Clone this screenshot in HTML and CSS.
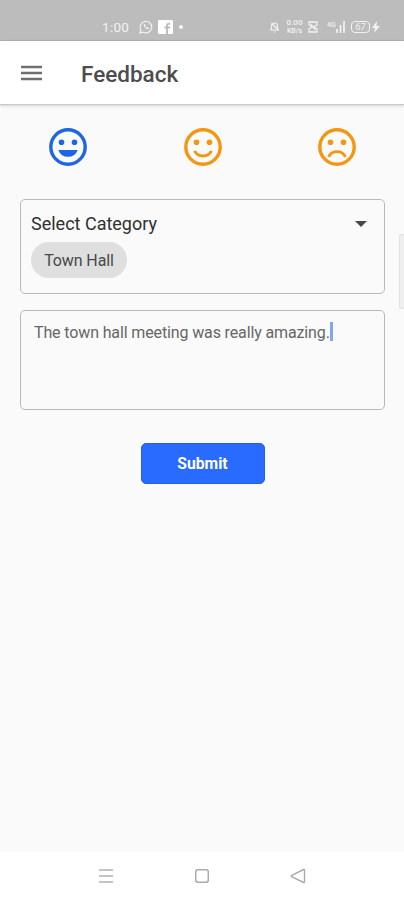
FILE: index.html
```html
<!DOCTYPE html>
<html lang="en">
<head>
<meta charset="utf-8">
<title>Feedback</title>
<link rel="stylesheet" href="styles.css">
</head>
<body>
<div class="status">
  <span class="time">1:00</span>
  <svg class="whatsapp" width="14" height="14" viewBox="0 0 14 14"><path d="M1 13l.9-3A5.800 5.800 0 1 1 4 12.100z" fill="none" stroke="currentColor" stroke-width="1.200"/><path d="M5 4.200c-1.200 1.600 2.400 5.800 4.500 4.800l.4-1.200-1.500-.7-.7.7c-.8-.3-1.300-.9-1.600-1.600l.6-.7-.6-1.300z" fill="currentColor"/></svg>
  <svg class="facebook" width="15" height="14" viewBox="0 0 15 14"><rect width="15" height="14" rx="1" fill="currentColor"/><path d="M9 14V8M9 8V5.500Q9 3.500 12 3.700M6.500 7.500H12" fill="none" stroke="#bcbcbc" stroke-width="1.900"/></svg>
  <span class="dot"></span>
  <svg class="bell" width="11" height="12" viewBox="0 0 11 12"><path d="M2.500 8.500V5a3 3 0 0 1 6 0v3.500M.8 9h9.400M4.500 11h2M2.500 2l7 7.500" fill="none" stroke="currentColor" stroke-width="1.200"/></svg>
  <span class="rate"><span>0.00</span><span>KB/s</span></span>
  <svg class="sim" width="10" height="12" viewBox="0 0 10 12"><path d="M1 1h8v3L6 6l3 2v3H1V8l3-2-3-2zM3 3l4 6" fill="none" stroke="currentColor" stroke-width="1.300"/></svg>
  <span class="net">4G</span>
  <svg class="bars" width="9" height="12" viewBox="0 0 9 12"><path d="M1 8v4M4.500 4v8M8 0v12" stroke="currentColor" stroke-width="1.700"/></svg>
  <span class="battery">67</span>
  <svg class="bolt" width="8" height="12" viewBox="0 0 8 12"><path d="M5 0L0 7h3l-1 5 6-7H4.500z" fill="currentColor"/></svg>
</div>
<header class="appbar">
  <svg class="menu" width="21" height="16" viewBox="0 0 21 16"><path d="M0 2h21M0 8h21M0 14h21" stroke="currentColor" stroke-width="2.400"/></svg>
  <h1>Feedback</h1>
</header>
<main>
  <div class="moods">
    <svg class="mood selected" viewBox="0 0 38 38"><circle cx="19" cy="19" r="17.200"/><circle class="eye" cx="12.500" cy="14.200" r="2.800"/><circle class="eye" cx="25.500" cy="14.200" r="2.800"/><path class="eye" d="M9.300 22h19.400a10.300 10.300 0 0 1-19.400 0z"/></svg>
    <svg class="mood" viewBox="0 0 38 38"><circle cx="19" cy="19" r="17.200"/><circle class="eye" cx="12.500" cy="14.200" r="2.800"/><circle class="eye" cx="25.500" cy="14.200" r="2.800"/><path class="mouth" d="M10.600 22.800a9.400 9.400 0 0 0 16.800 0"/></svg>
    <svg class="mood" viewBox="0 0 38 38"><circle cx="19" cy="19" r="17.200"/><circle class="eye" cx="12.500" cy="14.200" r="2.800"/><circle class="eye" cx="25.500" cy="14.200" r="2.800"/><path class="mouth" d="M10.600 28.800a9.400 9.400 0 0 1 16.800 0"/></svg>
  </div>
  <section class="field category">
    <div class="select"><span>Select Category</span><svg width="12" height="6" viewBox="0 0 12 6"><path d="M0 0h12L6 6z" fill="currentColor"/></svg></div>
    <span class="chip">Town Hall</span>
  </section>
  <section class="field message"><span class="text">The town hall meeting was really amazing.</span><span class="caret"></span></section>
  <button class="submit">Submit</button>
  <div class="edge"></div>
</main>
<nav class="nav">
  <svg width="16" height="16" viewBox="0 0 16 16"><path d="M1 2h14M1 8h14M1 14h14" stroke="#c4c4c4" stroke-width="2"/></svg>
  <svg width="16" height="16" viewBox="0 0 16 16"><rect x="1.700" y="1.700" width="12.600" height="12.600" rx="2.200" fill="none" stroke="#aaa" stroke-width="1.500"/></svg>
  <svg width="16" height="16" viewBox="0 0 16 16"><path d="M13.500 1.500Q14.500 1.200 14.500 2.500v11q0 1.300-1 1L1.500 8.700Q.8 8 1.500 7.500z" fill="none" stroke="#aaa" stroke-width="1.400"/></svg>
</nav>
</body>
</html>
```
FILE: styles.css
```css
* { box-sizing: border-box; }
body {
  margin: 0;
  height: 900px;
  display: flex;
  flex-direction: column;
  overflow: hidden;
  background: #fafafa;
  font-family: Roboto, sans-serif;
}
svg { display: block; flex: none; }

.status {
  height: 41px;
  flex: none;
  display: flex;
  align-items: center;
  padding: 13px 0 0 102px;
  background: #bcbcbc;
  border-bottom: 1px solid #b0b0b0;
  color: #f2f2f2;
}
.time { width: 37px; font-size: 13.5px; line-height: 14px; letter-spacing: .3px; }
.facebook { margin-left: 5px; color: #fff; }
.dot { width: 4px; height: 4px; margin-left: 6px; border-radius: 50%; background: #fff; }
.bell { margin-left: 86px; }
.rate {
  width: 19px;
  margin-left: 5px;
  display: flex;
  flex-direction: column;
  align-items: center;
  font-size: 8px;
  font-weight: 500;
  line-height: 8px;
}
.rate span:last-child { font-size: 7px; line-height: 8px; }
.sim { margin-left: 4px; }
.net { width: 9px; height: 12px; margin-left: 9px; font-size: 7px; font-weight: 500; line-height: 8px; }
.battery {
  width: 19px;
  height: 12px;
  margin-left: 6px;
  border: 1.5px solid #f2f2f2;
  border-radius: 4px;
  text-align: center;
  font-size: 9px;
  line-height: 10px;
}
.bolt { margin-left: 2px; }

.appbar {
  position: relative;
  height: 64px;
  flex: none;
  display: flex;
  align-items: center;
  padding-left: 21px;
  background: #fff;
  border-bottom: 1px solid #c9c9c9;
  box-shadow: 0 1px 3px rgba(0, 0, 0, .16);
}
.menu { color: #707070; }
h1 {
  margin: 2px 0 0 39px;
  color: #4d4d4d;
  font-size: 22.5px;
  font-weight: 500;
  line-height: 28px;
}

main {
  position: relative;
  flex: 1;
  display: flex;
  flex-direction: column;
  padding: 22px 19px 0 20px;
}
.moods { display: flex; justify-content: space-between; padding: .5px 29px 0 29px; }
.mood {
  width: 38px;
  height: 38px;
  fill: none;
  stroke: #f39611;
  stroke-width: 3.4;
}
.mood .eye { fill: #f39611; stroke: none; }
.mood .mouth { stroke-width: 2.9; }
.mood.selected { stroke: #1c65e3; }
.mood.selected .eye { fill: #1c65e3; }

.field { border: 1.5px solid #b9b9b9; border-radius: 5px; }
.category { height: 95px; margin-top: 33.5px; padding: 13px 17px 0 10px; }
.select {
  display: flex;
  align-items: center;
  justify-content: space-between;
  color: #303030;
  font-size: 18px;
  line-height: 22px;
}
.select svg { color: #484848; }
.chip {
  display: flex;
  align-items: center;
  justify-content: center;
  width: 96px;
  height: 36px;
  margin-top: 7px;
  border-radius: 18px;
  background: #dfdfdf;
  color: #484848;
  font-size: 16px;
  letter-spacing: -.1px;
}
.message {
  height: 100px;
  margin-top: 16px;
  padding: 11px 0 0 13px;
  display: flex;
  align-items: flex-start;
  color: #666;
  font-size: 16px;
  line-height: 21px;
}
.text { white-space: nowrap; letter-spacing: -.13px; }
.caret { width: 3px; height: 19px; background: #7fa8ee; }
.submit {
  align-self: center;
  width: 124px;
  height: 41px;
  margin-top: 33px;
  padding: 1px 0 0;
  border: 1px solid #2361ed;
  border-radius: 5px;
  background: #296aff;
  color: #fff;
  font: 700 15.7px/20px Roboto, sans-serif;
}
.edge {
  position: absolute;
  top: 129px;
  right: 0;
  width: 5px;
  height: 75px;
  border: 1px solid #e2e2e2;
  border-right: 0;
  border-radius: 3px 0 0 3px;
  background: #efefef;
}

.nav {
  height: 48px;
  flex: none;
  display: flex;
  justify-content: space-between;
  align-items: center;
  padding: 0 98px;
  background: #fff;
}
```
